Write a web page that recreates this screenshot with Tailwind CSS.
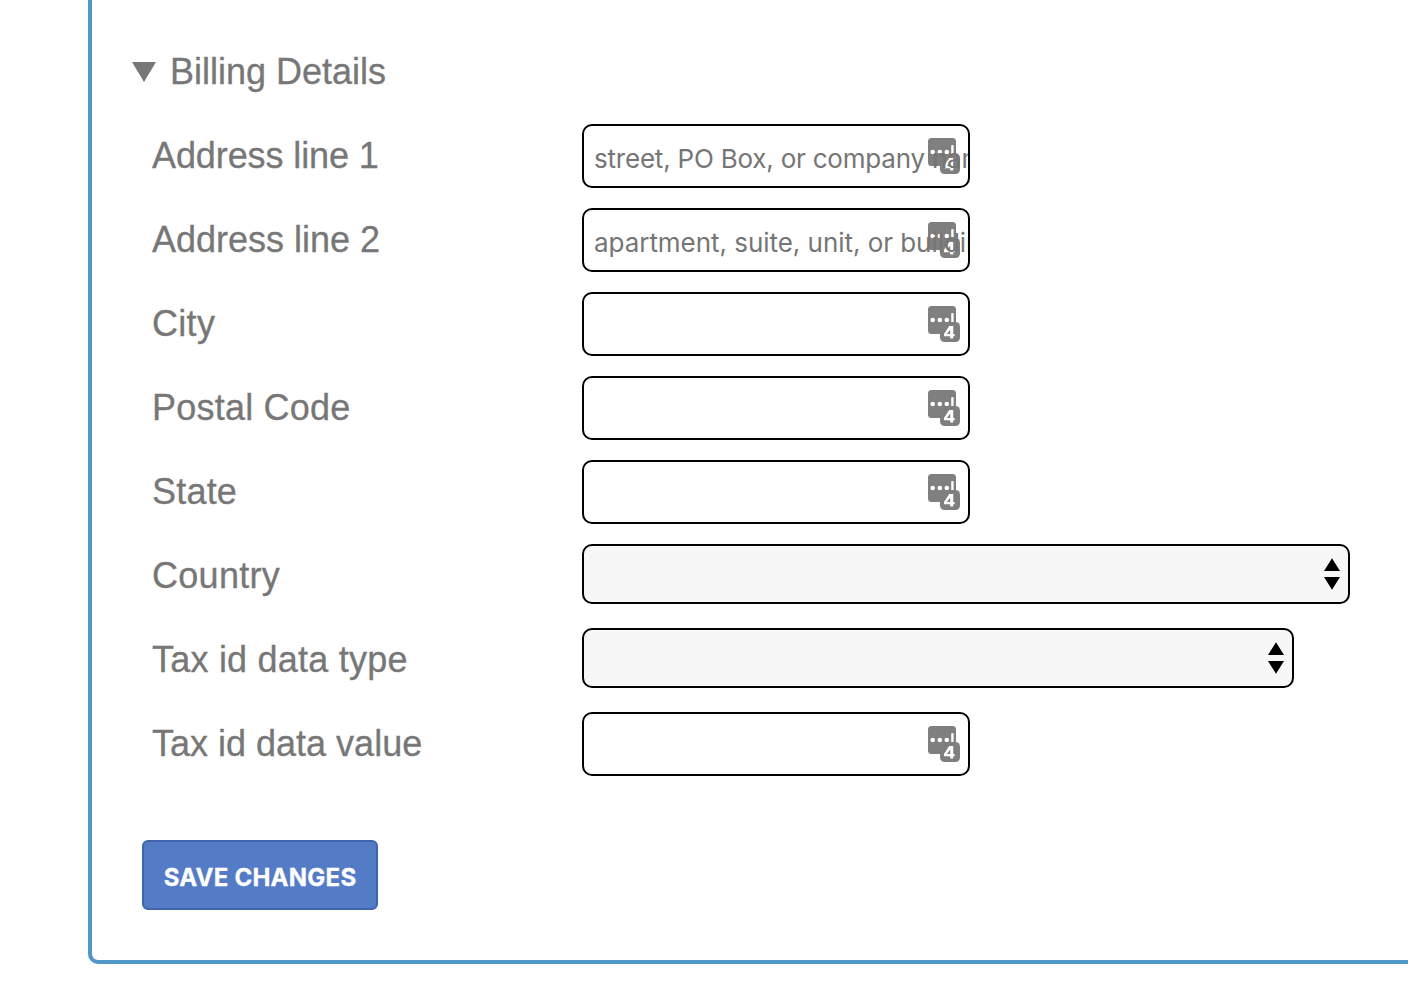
<!DOCTYPE html>
<html lang="en">
<head>
<meta charset="utf-8">
<title>Billing Details</title>
<script src="https://cdn.jsdelivr.net/npm/@tailwindcss/browser@4"></script>
</head>
<body class="bg-white h-[998px] overflow-hidden pl-[88px]">
<svg class="hidden">
  <symbol id="pw" viewBox="0 0 32 36">
    <rect width="28" height="28" rx="3.5" fill="#7f7f7f"/>
    <g fill="#fff"><circle cx="4.7" cy="14" r="2.3"/><circle cx="11.8" cy="14" r="2.3"/><circle cx="18.8" cy="14" r="2.3"/><rect x="23.2" y="7" width="2.4" height="12" rx="1"/></g>
    <rect x="12" y="16" width="20" height="20" rx="4.5" fill="#7f7f7f"/>
    <path fill-rule="evenodd" d="M21.200 20H25.200V28H26.600V30.200H25.200V32.500H22.200V30.200H16V27.900ZM22.200 23.400 18.900 28H22.200Z" fill="#fff"/>
  </symbol>
  <symbol id="arrows" viewBox="0 0 16 32"><path d="M8 .2 16 13H0ZM8 31.800 0 19h16Z" fill="#000"/></symbol>
</svg>
<main class="h-[964px] border-l-4 border-b-4 border-[#5297c9] rounded-bl-[10px] pl-[40px] pt-[40px] font-['Liberation_Sans',Arial,sans-serif] text-[36px] leading-[64px] text-[#777] [-webkit-text-stroke:0.3px]">
  <h2 class="flex items-center h-[64px]">
    <svg class="w-6 h-5 mr-[14px]" viewBox="0 0 24 20"><path d="M0 0h24L12 20Z" fill="#777"/></svg>
    <span>Billing Details</span>
  </h2>
  <form class="mt-5 pl-5">
    <div class="flex flex-col gap-5">
      <div class="flex"><label for="a1" class="w-[430px] tracking-[-0.1px]">Address line 1</label>
        <div class="relative w-[388px] h-16 border-2 border-black rounded-[10px] overflow-hidden"><svg class="absolute left-[344px] top-3 w-8 h-9"><use href="#pw"/></svg><input id="a1" placeholder="street, PO Box, or company name" class="relative block w-full h-full pl-[10px] pt-[4px] bg-transparent font-[Inter,sans-serif] text-[26px] tracking-[-0.21px] placeholder:text-[#757575] [-webkit-text-stroke:0px]"></div></div>
      <div class="flex"><label for="a2" class="w-[430px]">Address line 2</label>
        <div class="relative w-[388px] h-16 border-2 border-black rounded-[10px] overflow-hidden"><svg class="absolute left-[344px] top-3 w-8 h-9"><use href="#pw"/></svg><input id="a2" placeholder="apartment, suite, unit, or building" class="relative block w-full h-full pl-[10px] pt-[4px] bg-transparent font-[Inter,sans-serif] text-[26px] tracking-[-0.04px] placeholder:text-[#757575] [-webkit-text-stroke:0px]"></div></div>
      <div class="flex"><label class="w-[430px] tracking-[0.3px]">City</label>
        <div class="w-[388px] h-16 border-2 border-black rounded-[10px] flex justify-end items-center pr-2"><svg class="w-8 h-9"><use href="#pw"/></svg></div></div>
      <div class="flex"><label class="w-[430px] tracking-[0.22px]">Postal Code</label>
        <div class="w-[388px] h-16 border-2 border-black rounded-[10px] flex justify-end items-center pr-2"><svg class="w-8 h-9"><use href="#pw"/></svg></div></div>
      <div class="flex"><label class="w-[430px] tracking-[0.2px]">State</label>
        <div class="w-[388px] h-16 border-2 border-black rounded-[10px] flex justify-end items-center pr-2"><svg class="w-8 h-9"><use href="#pw"/></svg></div></div>
      <div class="flex h-16"><label class="w-[430px] tracking-[0.3px]">Country</label>
        <div class="w-[768px] h-[60px] border-2 border-black rounded-[10px] bg-[#f7f7f7] flex justify-end items-center pr-2"><svg class="w-4 h-8"><use href="#arrows"/></svg></div></div>
      <div class="flex h-16"><label class="w-[430px] tracking-[0.22px]">Tax id data type</label>
        <div class="w-[712px] h-[60px] border-2 border-black rounded-[10px] bg-[#f7f7f7] flex justify-end items-center pr-2"><svg class="w-4 h-8"><use href="#arrows"/></svg></div></div>
      <div class="flex"><label class="w-[430px]">Tax id data value</label>
        <div class="w-[388px] h-16 border-2 border-black rounded-[10px] flex justify-end items-center pr-2"><svg class="w-8 h-9"><use href="#pw"/></svg></div></div>
    </div>
    <button type="button" class="block mt-16 -ml-[10px] w-[236px] h-[70px] pt-[5px] border-2 border-[#3f64ac] rounded-[6px] bg-[#537bc6] text-white font-[Inter,sans-serif] font-bold text-[24px] leading-none tracking-[0.25px] whitespace-nowrap">SAVE CHANGES</button>
  </form>
</main>
</body>
</html>
